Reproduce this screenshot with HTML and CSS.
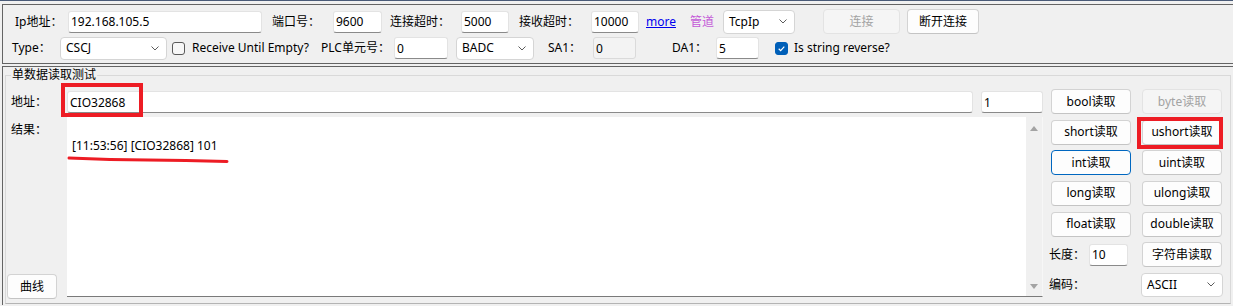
FILE: index.html
```html
<!DOCTYPE html>
<html lang="zh-CN">
<head>
  <meta charset="UTF-8" />
  <title>单数据读取测试</title>
  <link rel="stylesheet" href="styles.css">
</head>
<body>

  <div class="frame-top"></div>

  <!-- Connection settings -->
  <div class="panel conn">
    <div class="row row-1">
      <span class="lbl lbl-ip">Ip地址：</span>
      <input class="in in-ip" value="192.168.105.5">
      <span class="lbl lbl-port">端口号：</span>
      <input class="in in-port" value="9600">
      <span class="lbl lbl-ct">连接超时：</span>
      <input class="in in-ct" value="5000">
      <span class="lbl lbl-rt">接收超时：</span>
      <input class="in in-rt" value="10000">
      <a href="#" class="more">more</a>
      <span class="pipe">管道</span>
      <div class="sel sel-pipe"><span>TcpIp</span><svg viewBox="0 0 8 5"><polyline points="0.5,0.5 4,4 7.5,0.5"/></svg></div>
      <button class="btn btn-conn" disabled>连接</button>
      <button class="btn btn-disc">断开连接</button>
    </div>
    <div class="row row-2">
      <span class="lbl lbl-type">Type：</span>
      <div class="sel sel-type"><span>CSCJ</span><svg viewBox="0 0 8 5"><polyline points="0.5,0.5 4,4 7.5,0.5"/></svg></div>
      <span class="chk chk-recv"></span>
      <span class="lbl lbl-recv">Receive Until Empty?</span>
      <span class="lbl lbl-plc">PLC单元号：</span>
      <input class="in in-plc" value="0">
      <div class="sel sel-order"><span>BADC</span><svg viewBox="0 0 8 5"><polyline points="0.5,0.5 4,4 7.5,0.5"/></svg></div>
      <span class="lbl lbl-sa">SA1：</span>
      <input class="in in-sa" value="0" readonly>
      <span class="lbl lbl-da">DA1：</span>
      <input class="in in-da" value="5">
      <span class="chk chk-rev on"><svg viewBox="0 0 13 13"><polyline points="3.2,6.8 5.5,9 9.8,4.2"/></svg></span>
      <span class="lbl lbl-rev">Is string reverse?</span>
    </div>
  </div>

  <!-- Single value read test -->
  <div class="panel test">
    <fieldset class="group">
      <legend>单数据读取测试</legend>
      <div class="group-body">
        <div class="left">
          <span class="lbl">地址：</span>
          <div class="addr-row">
            <input class="in in-addr" value="CIO32868">
            <input class="in in-cnt" value="1">
          </div>
          <div class="res-side">
            <span class="lbl res-lbl">结果：</span>
            <button class="btn btn-curve">曲线</button>
          </div>
          <div class="result">
            <div class="result-text">[11:53:56] [CIO32868] 101</div>
            <div class="vscroll"><span class="arr up"></span><span class="arr down"></span></div>
          </div>
        </div>

        <div class="ops">
          <button class="btn">bool读取</button>
          <button class="btn" disabled>byte读取</button>
          <button class="btn">short读取</button>
          <button class="btn">ushort读取</button>
          <button class="btn focus">int读取</button>
          <button class="btn">uint读取</button>
          <button class="btn">long读取</button>
          <button class="btn">ulong读取</button>
          <button class="btn">float读取</button>
          <button class="btn">double读取</button>
          <div class="op-field"><span class="lbl op-lbl">长度：</span><input class="in in-len" value="10"></div>
          <button class="btn">字符串读取</button>
          <div class="op-field"><span class="lbl op-lbl">编码：</span></div>
          <div class="sel sel-enc"><span>ASCII</span><svg viewBox="0 0 8 5"><polyline points="0.5,0.5 4,4 7.5,0.5"/></svg></div>
        </div>
      </div>
    </fieldset>
  </div>

  <!-- Red annotation marks drawn over the screenshot -->
  <svg class="marks" width="1233" height="306" viewBox="0 0 1233 306">
    <rect x="63" y="85" width="78" height="30"/>
    <rect x="1139" y="119" width="82" height="28"/>
    <polyline points="69,158 110,159.5"/>
    <polyline points="110,159.5 186,160.5"/>
    <polyline points="186,160.5 227,161.5"/>
  </svg>

</body>
</html>
```

FILE: styles.css
```css
/* Reset and base */
* { margin: 0; padding: 0; box-sizing: border-box; }
html, body { height: 100%; }
body {
  font-family: "Noto Sans", "Noto Sans CJK SC", sans-serif;
  font-size: 12px;
  line-height: 16px;
  color: #000;
  background: #f0f0f0;
  padding-left: 2px;
  overflow: hidden;
  position: relative;
}

.frame-top {
  height: 1px;
  margin-left: -2px;
  background: #4a5b78;
}

/* Panels */
.panel {
  border: 1px solid #646464;
  margin-right: -20px;
}
.conn {
  margin-top: 3px;
  padding: 4px 0 3px;
}
.test {
  margin-top: 2px;
  padding-bottom: 1px;
  border-right: none;
  border-bottom: none;
}

.row {
  display: flex;
  align-items: center;
  white-space: nowrap;
}
.row-1 { height: 25px; }
.row-2 { height: 24px; margin-top: 2px; }

.lbl { display: inline-block; white-space: nowrap; }

/* Controls */
.in {
  height: 22px;
  padding: 0 2px;
  font: inherit;
  color: #000;
  background: #fff;
  border: 1px solid #e3e3e3;
  border-bottom-color: #8a8a8a;
  border-radius: 3px;
  outline: none;
}
.in[readonly] {
  background: #f3f3f3;
  border-color: #dadada;
}

.btn {
  height: 25px;
  font: inherit;
  color: #000;
  background: #fdfdfd;
  border: 1px solid #d3d3d3;
  border-bottom-color: #c4c4c4;
  border-radius: 4px;
  cursor: pointer;
}
.btn:disabled {
  color: #a3a3a3;
  background: #f5f5f5;
  border-color: #e3e3e3;
  cursor: default;
}
.btn.focus { border-color: #0067c0; }

.sel {
  display: flex;
  align-items: center;
  justify-content: space-between;
  height: 24px;
  padding: 0 7px 0 5px;
  background: #fff;
  border: 1px solid #d5d5d5;
  border-radius: 4px;
}
.sel svg {
  width: 8px;
  height: 5px;
  fill: none;
  stroke: #5c5c5c;
  stroke-width: 1;
}

.chk {
  display: inline-block;
  width: 13px;
  height: 13px;
  border: 1px solid #5a5a5a;
  border-radius: 3px;
  background: #f7f7f7;
}
.chk.on {
  background: #005fb8;
  border-color: #005fb8;
}
.chk svg {
  display: block;
  width: 11px;
  height: 11px;
  fill: none;
  stroke: #fff;
  stroke-width: 1.4;
}

/* Row 1 */
.lbl-ip { margin-left: 12px; width: 53px; }
.in-ip { width: 194px; }
.lbl-port { margin-left: 10px; width: 61px; }
.in-port { width: 49px; }
.lbl-ct { margin-left: 8px; width: 71px; }
.in-ct { width: 48px; }
.lbl-rt { margin-left: 10px; width: 72px; }
.in-rt { width: 48px; }
.more {
  margin-left: 7px;
  width: 44px;
  color: #0000ee;
}
.pipe { width: 33px; color: #c45ad8; }
.sel-pipe { width: 72px; }
.btn-conn { margin-left: 28px; width: 77px; }
.btn-disc { margin-left: 7px; width: 72px; }

/* Row 2 */
.lbl-type { margin-left: 9px; width: 48px; }
.sel-type { width: 107px; height: 23px; }
.chk-recv { margin-left: 5px; }
.lbl-recv { margin-left: 7px; width: 129px; }
.lbl-plc { width: 73px; }
.in-plc { width: 54px; }
.sel-order { margin-left: 8px; width: 78px; height: 23px; }
.lbl-sa { margin-left: 14px; width: 45px; }
.in-sa { width: 43px; }
.lbl-da { margin-left: 36px; width: 44px; }
.in-da { width: 43px; }
.chk-rev { margin-left: 16px; }
.lbl-rev { margin-left: 6px; }

/* Group box */
.group {
  width: 1226px;
  margin-left: 2px;
  padding: 6px 8px 5px 5px;
  border: 1px solid #d9d9d9;
  border-bottom-color: #b4b4b4;
}
.group legend {
  padding: 0 1px;
  line-height: 16px;
}
.group-body {
  display: flex;
  height: 209px;
}

.left {
  flex: 1;
  display: grid;
  grid-template-columns: 56px 1fr;
  grid-template-rows: 22px 180px;
  row-gap: 4px;
  margin-top: 2px;
}
.left > .lbl { align-self: center; }
.addr-row {
  display: flex;
  gap: 8px;
}
.in-addr { flex: 1; }
.in-cnt { width: 62px; }

.res-side {
  display: flex;
  flex-direction: column;
  justify-content: space-between;
  align-items: flex-start;
}
.res-lbl { padding-top: 5px; }
.btn-curve {
  width: 50px;
  margin: 0 0 -2px -4px;
}

.result {
  display: flex;
  background: #fff;
  border-bottom: 1px solid #7a7a7a;
  border-right: 1px solid #f7f7f7;
}
.result-text {
  flex: 1;
  padding: 21px 5px;
}
.vscroll {
  width: 16px;
  display: flex;
  flex-direction: column;
  justify-content: space-between;
  align-items: center;
  padding: 9px 0 7px;
  background: #f0f0f0;
}
.arr {
  width: 0;
  height: 0;
  border-left: 4px solid transparent;
  border-right: 4px solid transparent;
}
.arr.up { border-bottom: 5px solid #a3a3a3; }
.arr.down { border-top: 5px solid #a3a3a3; }

/* Read buttons */
.ops {
  width: 171px;
  margin-left: 8px;
  display: grid;
  grid-template-columns: 80px 80px;
  grid-auto-rows: 25px;
  column-gap: 11px;
  row-gap: 5.67px;
}
.op-field {
  display: flex;
  align-items: center;
}
.op-lbl { width: 40px; margin-left: -2px; }
.in-len { width: 39px; }
.sel-enc { width: 82px; margin-left: -1px; }

/* Annotation overlay */
.marks {
  position: absolute;
  top: 0;
  left: 0;
  pointer-events: none;
  fill: none;
  stroke: #ed1c24;
}
.marks rect { stroke-width: 4; }
.marks polyline { stroke-width: 3; stroke-linecap: round; }
```
